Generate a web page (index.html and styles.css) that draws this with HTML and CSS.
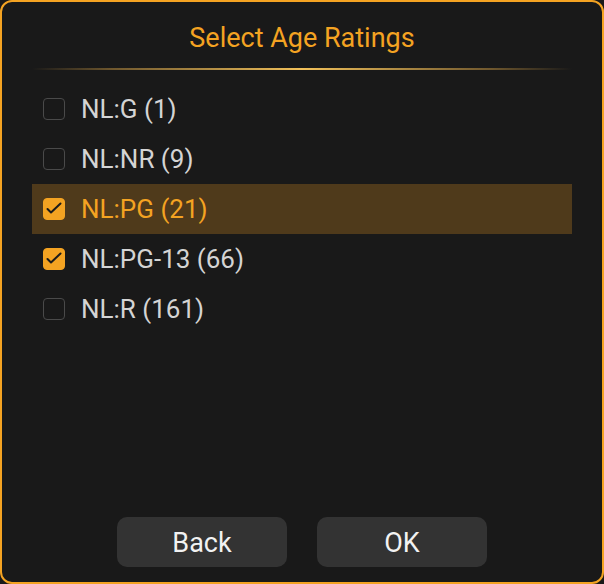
FILE: index.html
```html
<!DOCTYPE html>
<html lang="en">
<head>
<meta charset="utf-8">
<title>Select Age Ratings</title>
<link rel="stylesheet" href="styles.css">
</head>
<body>
<div class="dialog">
  <h1 class="title">Select Age Ratings</h1>
  <div class="divider"></div>
  <ul class="list">
    <li class="row"><span class="box"></span><span class="label">NL:G (1)</span></li>
    <li class="row"><span class="box"></span><span class="label">NL:NR (9)</span></li>
    <li class="row row-focus"><span class="box box-on"><svg viewBox="0 0 22 22" width="22" height="22"><path d="M4.5 11 L8 14.5 L17.5 5.5" fill="none" stroke="#1b1b1b" stroke-width="2" stroke-linecap="round" stroke-linejoin="round"/></svg></span><span class="label">NL:PG (21)</span></li>
    <li class="row"><span class="box box-on"><svg viewBox="0 0 22 22" width="22" height="22"><path d="M4.5 11 L8 14.5 L17.5 5.5" fill="none" stroke="#1b1b1b" stroke-width="2" stroke-linecap="round" stroke-linejoin="round"/></svg></span><span class="label">NL:PG-13 (66)</span></li>
    <li class="row"><span class="box"></span><span class="label">NL:R (161)</span></li>
  </ul>
  <div class="actions">
    <button class="btn">Back</button>
    <button class="btn">OK</button>
  </div>
</div>
</body>
</html>
```

FILE: styles.css
```css
* { box-sizing: border-box; }
html, body { margin: 0; padding: 0; background: #191919; }
body { font-family: Roboto, "Noto Sans", sans-serif; }

.dialog {
  width: 604px;
  height: 584px;
  border: 2px solid #f4a322;
  border-radius: 12px;
  background: #191919;
  display: flex;
  flex-direction: column;
  padding: 20px 30px 15px;
}

.title {
  margin: 0;
  font-size: 27px;
  line-height: 32px;
  font-weight: 400;
  color: #f4a322;
  text-align: center;
}

.divider {
  height: 2px;
  margin-top: 14px;
  background: linear-gradient(to right, rgba(200,150,60,0) 0%, rgba(170,130,60,0.6) 15%, #f2c15a 50%, rgba(170,130,60,0.6) 85%, rgba(200,150,60,0) 100%);
}

.list {
  list-style: none;
  margin: 14px 0 0;
  padding: 0;
}

.row {
  height: 50px;
  display: flex;
  align-items: center;
  padding-left: 11px;
  gap: 16px;
  font-size: 26px;
  line-height: 50px;
  color: #d4d4d4;
}

.row-focus {
  background: #4f3a1b;
  color: #f4a322;
}

.box {
  width: 22px;
  height: 22px;
  border: 1px solid #4a4a4a;
  border-radius: 4px;
  flex: none;
  display: flex;
}

.box-on {
  background: #f4a322;
  border-color: #f4a322;
}

.box svg { margin: -1px; }

.actions {
  margin-top: auto;
  display: flex;
  justify-content: center;
  gap: 30px;
}

.btn {
  width: 170px;
  height: 50px;
  border: none;
  border-radius: 10px;
  background: #333333;
  color: #f2f2f2;
  font-family: Roboto, "Noto Sans", sans-serif;
  font-size: 27px;
  line-height: 48px;
  padding: 2px 0 0;
}
```
